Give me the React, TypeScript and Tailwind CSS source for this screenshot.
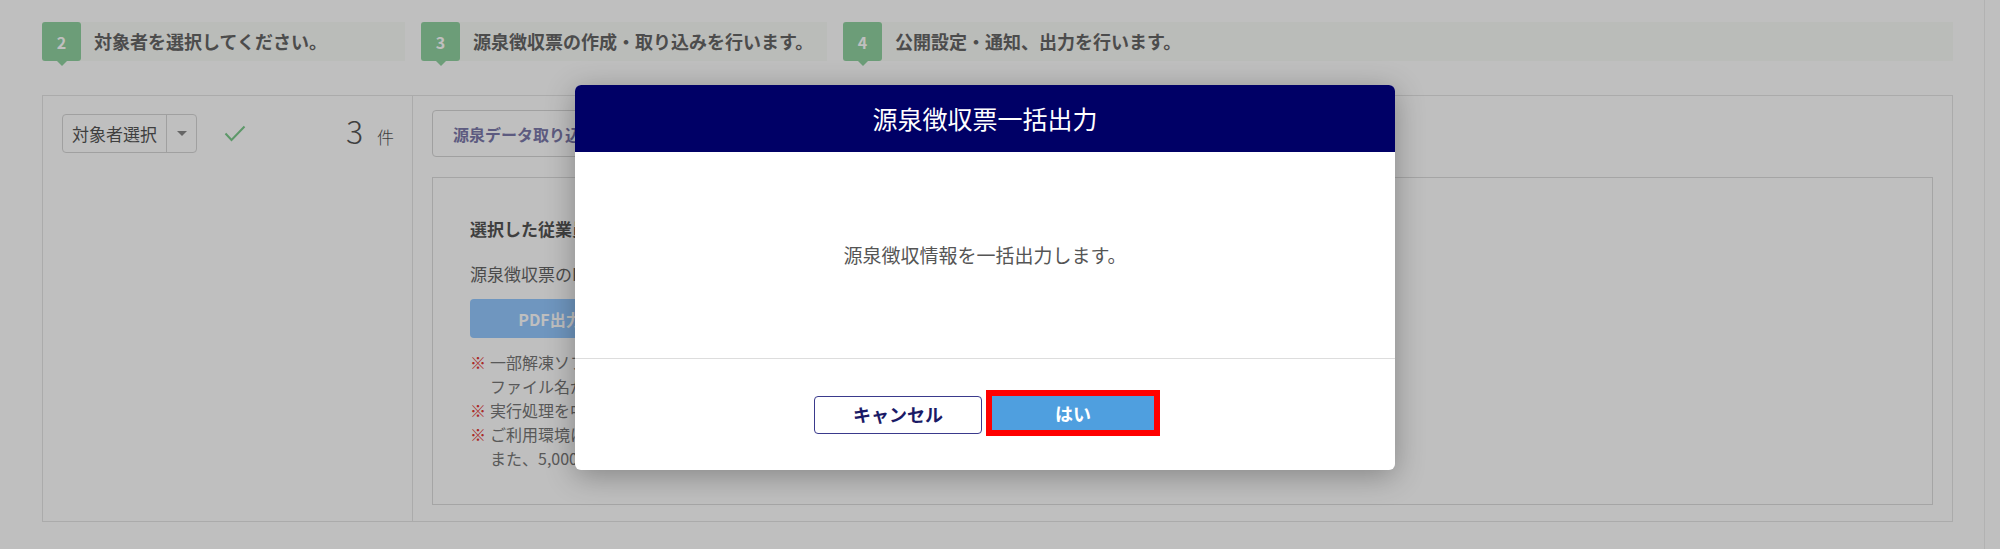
const steps = [
  { no: 2, label: "対象者を選択してください。", width: "w-[363px]" },
  { no: 3, label: "源泉徴収票の作成・取り込みを行います。", width: "w-[406px]" },
  { no: 4, label: "公開設定・通知、出力を行います。", width: "flex-1" },
];

const notes = [
  { mark: true, text: "一部解凍ソフトでは、ZIPファイル内の" },
  { mark: false, text: "ファイル名が文字化けする場合があります。" },
  { mark: true, text: "実行処理を中断しないでください。" },
  { mark: true, text: "ご利用環境によっては時間がかかる場合があります。" },
  { mark: false, text: "また、5,000件を超える場合は分割してください。" },
];

function StepBar({ no, label, width }: { no: number; label: string; width: string }) {
  return (
    <div className={`${width} flex h-[39px] items-center bg-[#f9fbf7]`}>
      <div className="relative flex h-[39px] w-[39px] shrink-0 items-center justify-center rounded-[3px] bg-[#90d2a0] text-[16px] font-bold text-white">
        {no}
        <span className="absolute left-1/2 top-full -translate-x-1/2 border-x-[5px] border-t-[5px] border-x-transparent border-t-[#90d2a0]" />
      </div>
      <span className="ml-[13px] text-[18px] font-bold text-[#666]">{label}</span>
    </div>
  );
}

export default function App() {
  return (
    <div className="relative h-[549px] w-[2000px] overflow-hidden bg-white font-['Noto_Sans_CJK_JP',sans-serif]">
      <div className="h-full w-[1985px] border-r border-[#eeeeee] pl-[42px] pr-[31px] pt-[22px]">
        <div className="flex gap-4">
          {steps.map((s) => (
            <StepBar key={s.no} {...s} />
          ))}
        </div>

        <div className="mt-[34px] flex h-[427px] border border-[#e4e4e4]">
          <div className="flex w-[370px] shrink-0 items-start border-r border-[#e4e4e4] pl-[19px] pt-[18px]">
            <div className="flex h-[39px] w-[135px] items-center rounded-[4px] border border-[#d6d6d6]">
              <span className="flex-1 pl-[9px] text-[17px] text-[#555]">対象者選択</span>
              <span className="flex h-full w-[30px] items-center justify-center border-l border-[#d6d6d6]">
                <span className="border-x-[5px] border-t-[5px] border-x-transparent border-t-[#888]" />
              </span>
            </div>
            <svg className="ml-[27px] mt-[11px]" width="22" height="17" viewBox="0 0 22 17">
              <path d="M1.5 8.5 L7.5 15 L20.5 1.5" fill="none" stroke="#7ccb8c" strokeWidth="2" />
            </svg>
            <div className="ml-auto mr-[18px] flex items-baseline text-[#555]">
              <span className="text-[32px] font-light leading-[32px]">3</span>
              <span className="ml-[14px] text-[17px] font-light leading-[17px]">件</span>
            </div>
          </div>

          <div className="flex flex-1 flex-col pl-[19px] pr-[19px] pt-[14px]">
            <div className="flex">
              <button className="h-[47px] rounded-[4px] border border-[#d6d6d6] px-[20px] text-[16px] font-bold text-[#7d7aab]">
                源泉データ取り込み
              </button>
            </div>
            <div className="mt-[20px] h-[328px] border border-[#dcdcdc] pl-[37px] pt-[40px]">
              <p className="text-[17px] font-bold leading-[22px] text-[#555]">選択した従業員の源泉徴収票を出力します。</p>
              <p className="mt-[23px] text-[17px] leading-[22px] text-[#666]">源泉徴収票のPDFを一括で出力できます。</p>
              <button className="mt-[14px] h-[39px] w-[160px] rounded-[4px] bg-[#94c8ff] text-[16px] font-bold text-white">
                PDF出力
              </button>
              <ul className="mt-[12px] text-[16px] leading-[24px] text-[#777]">
                {notes.map((n, i) => (
                  <li key={i} className="flex">
                    <span className={`w-[20px] ${n.mark ? "text-[#e53935]" : "text-transparent"}`}>※</span>
                    <span>{n.text}</span>
                  </li>
                ))}
              </ul>
            </div>
          </div>
        </div>
      </div>

      <div className="absolute inset-0 bg-black/25" />

      <div className="absolute left-[575px] top-[85px] w-[820px] overflow-hidden rounded-[6px] bg-white shadow-[0_6px_30px_rgba(0,0,0,0.3)]">
        <div className="flex h-[67px] items-center justify-center bg-[#000066] text-[25px] text-white">
          源泉徴収票一括出力
        </div>
        <div className="flex h-[206px] items-center justify-center text-[19px] text-[#555]">
          源泉徴収情報を一括出力します。
        </div>
        <div className="flex h-[112px] items-center justify-center gap-[4px] border-t border-[#dddddd] pl-[4px]">
          <button className="h-[38px] w-[168px] rounded-[4px] border border-[#3a3a8c] bg-white text-[18px] font-bold text-[#1a1a66]">
            キャンセル
          </button>
          <div className="mb-[3px] h-[46px] w-[174px] border-[6px] border-[#ff0000]">
            <button className="h-full w-full bg-[#4f9fdf] text-[18px] font-bold text-white">はい</button>
          </div>
        </div>
      </div>
    </div>
  );
}
